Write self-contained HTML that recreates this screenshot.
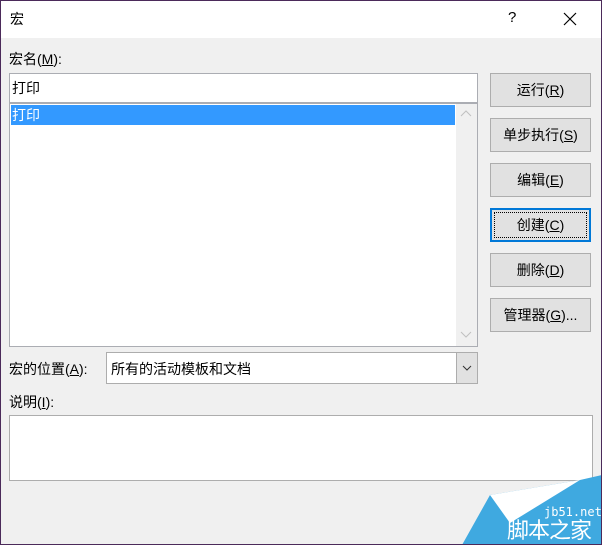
<!DOCTYPE html><html><head><style>
*{margin:0;padding:0;box-sizing:border-box}
body{width:602px;height:545px;overflow:hidden;font-family:"Liberation Sans","Noto Sans CJK SC",sans-serif;font-size:14px;color:#000;position:relative;background:#f0f0f0}
.a{position:absolute}
.frame{left:0;top:0;width:602px;height:545px;border:1px solid #4b2a5a}
.title{left:1px;top:1px;width:600px;height:37px;background:#fff}
.btn{left:490px;width:101px;height:34px;background:#e1e1e1;border:1px solid #adadad;text-align:center;line-height:32px}
.box{background:#fff;border:1px solid #abadb3}
u{text-decoration:underline}
</style></head><body>
<div class="a title"></div>
<div class="a" style="left:10px;top:9px">宏</div>
<div class="a" style="left:508px;top:9px;font-size:15px">?</div>
<svg class="a" style="left:563px;top:12px" width="14" height="14"><path d="M1 1L13 13M13 1L1 13" stroke="#000" stroke-width="1.2"/></svg>
<div class="a" style="left:9px;top:49px">宏名(<u>M</u>):</div>
<div class="a box" style="left:9px;top:73px;width:469px;height:30px"></div>
<div class="a" style="left:12px;top:78px">打印</div>
<div class="a box" style="left:9px;top:103px;width:469px;height:244px"></div>
<div class="a" style="left:11px;top:105px;width:444px;height:20px;background:#3399ff;color:#fff;padding-left:1px;line-height:20px">打印</div>
<div class="a" style="left:456px;top:104px;width:21px;height:242px;background:#f0f0f0"></div>
<svg class="a" style="left:460px;top:110px" width="12" height="8"><path d="M1 6L6 1L11 6" stroke="#c0c0c0" fill="none"/></svg>
<svg class="a" style="left:460px;top:331px" width="12" height="8"><path d="M1 1L6 6L11 1" stroke="#c0c0c0" fill="none"/></svg>
<div class="a btn" style="top:73px">运行(<u>R</u>)</div>
<div class="a btn" style="top:118px">单步执行(<u>S</u>)</div>
<div class="a btn" style="top:163px">编辑(<u>E</u>)</div>
<div class="a btn" style="top:208px;border:2px solid #0078d7;line-height:30px"><div style="position:absolute;left:2px;top:2px;right:2px;bottom:2px;border:1px dotted #000"></div>创建(<u>C</u>)</div>
<div class="a btn" style="top:253px">删除(<u>D</u>)</div>
<div class="a btn" style="top:298px">管理器(<u>G</u>)...</div>
<div class="a" style="left:9px;top:359px">宏的位置(<u>A</u>):</div>
<div class="a box" style="left:106px;top:352px;width:372px;height:32px;border-color:#adadad"></div>
<div class="a" style="left:111px;top:359px">所有的活动模板和文档</div>
<div class="a" style="left:456px;top:353px;width:21px;height:30px;background:#e1e1e1;border-left:1px solid #adadad"></div>
<svg class="a" style="left:461px;top:364px" width="12" height="8"><path d="M2 2L6 6L10 2" stroke="#333" fill="none"/></svg>
<div class="a" style="left:9px;top:392px">说明(<u>I</u>):</div>
<div class="a box" style="left:9px;top:415px;width:584px;height:66px;border-color:#adadad"></div>
<svg class="a" style="left:460px;top:475px" width="142" height="70"><polygon points="2,70 142,70 142,0 120,5 30,20" fill="#3fa9e0"/><polygon points="30,20 120,5 50,48" fill="#fff"/></svg>
<div class="a" style="left:544px;top:505px;color:#fff;font-family:'DejaVu Sans Mono',monospace;font-size:12px">jb51.net</div>
<div class="a" style="left:507px;top:519px;color:#fff;font-size:22px;line-height:24px;letter-spacing:-1px">脚本之家</div>
<div class="a frame"></div>
</body></html>
